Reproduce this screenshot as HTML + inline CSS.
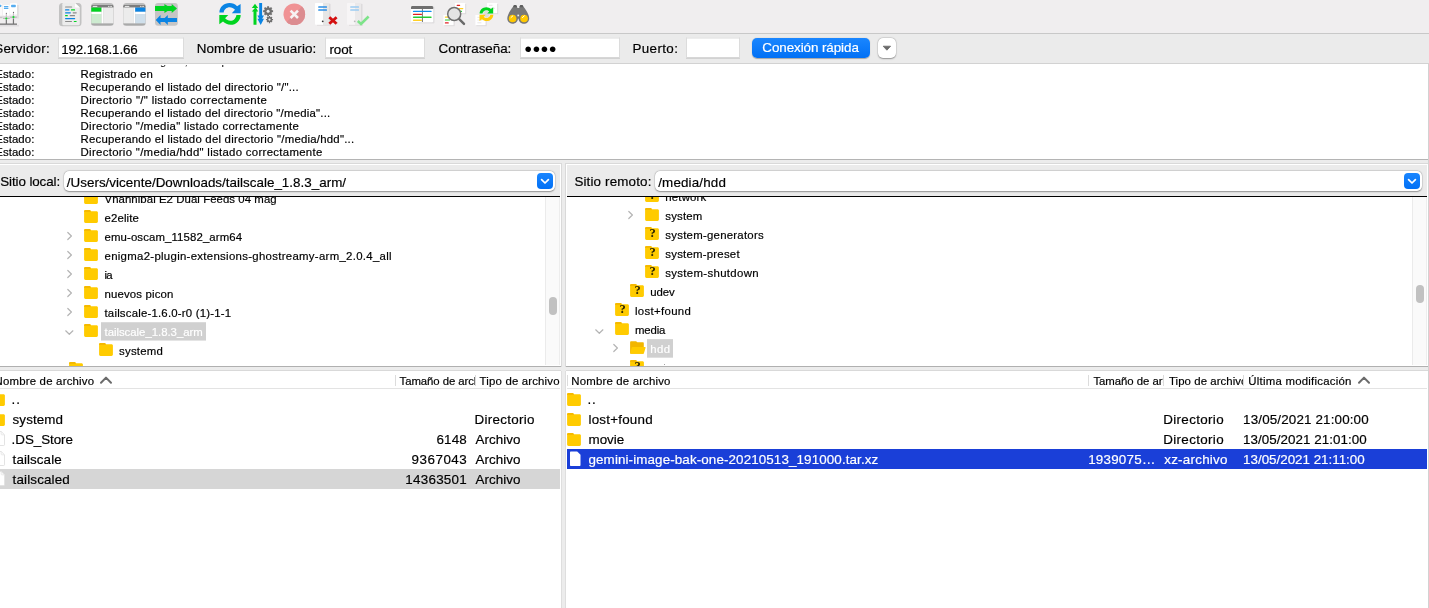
<!DOCTYPE html>
<html lang="es">
<head>
<meta charset="utf-8">
<title>FileZilla</title>
<style>
*{box-sizing:border-box;margin:0;padding:0}
html,body{width:1429px;height:608px;overflow:hidden;background:#fff}
body{position:relative;font-family:"Liberation Sans",sans-serif;font-size:13px;color:#000}
#w{position:absolute;left:0;top:0;width:1429px;height:608px;overflow:hidden;will-change:transform}
.a{position:absolute}
.t{position:absolute;white-space:nowrap;line-height:16px;height:16px;-webkit-text-stroke:0.18px currentColor}
.clip{position:absolute;overflow:hidden}
.clip .t{position:absolute}
#toolbar{left:0;top:0;width:1429px;height:33px;background:#f0eeef}
#tbline{left:0;top:33px;width:1429px;height:1px;background:#c8c8c8}
#qbar{left:0;top:34px;width:1429px;height:29px;background:#ebebeb}
#qbline{left:0;top:63px;width:1429px;height:1px;background:#d2d2d2}
.inp{position:absolute;top:37px;transform:translateY(0.5px);height:21px;background:#fff;border:1px solid #dcdcdc;border-bottom-color:#b0b0b0}
#btn{left:752px;top:38px;width:118px;height:20px;border-radius:5px;background:linear-gradient(#1a86ff,#0170f5);box-shadow:0 0.5px 1px rgba(0,0,0,.3)}
#dd{left:878px;top:38px;width:18px;height:20px;border-radius:5px;background:#fff;box-shadow:0 0.5px 1.5px rgba(0,0,0,.35),0 0 0 0.5px rgba(0,0,0,.08)}
#log{left:0;top:64px;width:1428px;height:95px;background:#fff}
#logline{left:0;top:159px;width:1429px;height:1px;background:#b4b4b4}
#band{left:0;top:160px;width:1429px;height:448px;background:#ececec}
.pane{position:absolute;top:163px;height:204px;background:#ebebeb;border:1px solid #d9d9d9;box-shadow:inset 0 0 0 1px #fff}
.blk{position:absolute;top:196px;height:1px;background:#000}
.tree{position:absolute;top:197px;height:169px;background:#fff}
.trk{position:absolute;top:197px;height:168px;width:15px;background:#fafafa;border-left:1px solid #ebebeb;border-right:1px solid #ededed}
.thumb{position:absolute;width:8px;border-radius:4px;background:#c1c1c1}
.tline{position:absolute;top:366px;height:1px;background:#b0b0b0}
.list{position:absolute;top:370px;height:238px;background:#fff;border-top:1px solid #d9d9d9}
.hline{position:absolute;top:388px;height:1px;background:#e3e3e3}
.vsep{position:absolute;top:375px;height:11px;width:1px;background:#dcdcdc}
.combo{position:absolute;top:171px;height:20px;background:#fff;border-radius:5px;box-shadow:0 0.5px 1.5px rgba(0,0,0,.35),0 0 0 0.5px rgba(0,0,0,.1)}
.cbtn{position:absolute;top:173px;width:16px;height:16px;border-radius:4px;background:linear-gradient(#1a86ff,#0170f5)}
.sel{position:absolute;height:20px}
.hl{position:absolute;height:18px;background:#d0d0d0}
svg{position:absolute;overflow:visible}
</style>
</head>
<body>
<div id="w">
<div class="a" id="toolbar"></div>
<div class="a" id="tbline"></div>
<div class="a" id="qbar"></div>
<div class="a" id="qbline"></div>
<div class="inp" style="left:58px;width:126px"></div>
<div class="inp" style="left:325px;width:100px"></div>
<div class="inp" style="left:520px;width:100px"></div>
<div class="inp" style="left:686px;width:54px"></div>
<div class="a" id="btn"></div>
<div class="a" id="dd"></div>
<div class="a" id="log"></div>
<div class="a" id="logline"></div>
<div class="a" id="band"></div>

<!-- left pane -->
<div class="pane" style="left:-2px;width:564px"></div>
<div class="combo" style="left:64px;width:491px"></div>
<div class="cbtn" style="left:537px"></div>
<div class="blk" style="left:0;width:560px"></div>
<div class="tree" style="left:0;width:561px"></div>
<div class="trk" style="left:545px"></div>
<div class="thumb" style="left:549px;top:297px;height:18px"></div>
<div class="tline" style="left:0;width:561px"></div>
<div class="list" style="left:0;width:561px"></div>
<div class="hline" style="left:0;width:560px"></div>
<div class="vsep" style="left:395px"></div>
<div class="vsep" style="left:475px"></div>
<div class="sel" style="left:0;top:469px;width:560px;background:#d6d6d6"></div>
<div class="hl" style="left:101px;top:322px;width:105px;height:18px;transform:translateY(0.4px) scaleY(1.02)"></div>

<div class="a" style="left:561px;top:371px;width:1px;height:237px;background:#dedede"></div>
<div class="a" style="left:565px;top:371px;width:1px;height:237px;background:#dedede"></div>
<!-- right pane -->
<div class="pane" style="left:565px;width:864px"></div>
<div class="combo" style="left:655px;width:767px"></div>
<div class="cbtn" style="left:1404px"></div>
<div class="blk" style="left:567px;width:860px"></div>
<div class="tree" style="left:566px;width:862px"></div>
<div class="trk" style="left:1412px"></div>
<div class="thumb" style="left:1416px;top:285px;height:18px"></div>
<div class="tline" style="left:566px;width:862px"></div>
<div class="a" style="left:1428px;top:64px;width:1px;height:544px;background:#d2d2d2"></div>
<div class="list" style="left:566px;width:862px"></div>
<div class="hline" style="left:567px;width:860px"></div>
<div class="vsep" style="left:567px"></div>
<div class="vsep" style="left:1088px"></div>
<div class="vsep" style="left:1163px"></div>
<div class="vsep" style="left:1243px"></div>
<div class="sel" style="left:567px;top:449px;width:860px;background:#1a3fd8"></div>
<div class="hl" style="left:647px;top:339px;width:26px;height:18px;transform:translateY(0.4px) scaleY(1.03)"></div>

<span class="t" id="pw" style="left:524.600px;top:37px;font-size:21px;line-height:24px;height:24px;letter-spacing:0.780px;-webkit-text-stroke:0">••••</span>
<svg style="left:-6px;top:2px" width="26" height="26" viewBox="0 0 26 26">
<rect x="23" y="3" width="1.800" height="13.500" fill="#e0dedf"/>
<rect x="6" y="22.800" width="19" height="1.700" fill="#dfdddf"/>
<rect x="1.500" y="1.500" width="6.600" height="12" rx=".8" fill="#fbfafa"/>
<rect x="9" y="2.900" width="6.600" height="10.500" rx=".8" fill="#fff"/>
<rect x="15.900" y="1.200" width="7.100" height="11.200" rx=".8" fill="#fff"/>
<rect x="4.500" y="2.700" width="2.800" height="2.200" rx=".6" fill="#55acf0"/>
<rect x="9.900" y="3.900" width="4.500" height="1.300" rx=".3" fill="#55acf0"/><rect x="9.900" y="5.700" width="4.500" height="1.300" rx=".3" fill="#55acf0"/>
<rect x="17.100" y="2.700" width="4.700" height="2.500" rx=".7" fill="#55acf0"/>
<rect x="6" y="14.200" width="17" height="2.200" fill="#dcdadb"/>
<rect x="16.100" y="14.700" width="6.700" height=".9" fill="#b3b1b2"/>
<rect x="9" y="16.100" width="6.700" height=".9" fill="#b3b1b2"/>
<rect x="0" y="15" width="8" height=".9" fill="#c4c2c3"/>
<rect x="11.800" y="12" width="1.100" height="4" fill="#c9bfc7"/><rect x="18.900" y="11" width="1.100" height="4" fill="#c9bfc7"/>
<rect x="11.750" y="17.500" width="1.200" height="4.500" fill="#767676"/><rect x="18.850" y="16.500" width="1.200" height="5.500" fill="#767676"/>
<circle cx="12.350" cy="11.300" r=".6" fill="#666"/><circle cx="19.500" cy="10.300" r=".6" fill="#555"/>
<circle cx="12.300" cy="16.500" r="1.050" fill="#0fdc2c"/><circle cx="19.450" cy="15.100" r="1.050" fill="#0fdc2c"/>
<rect x="0" y="21.500" width="23" height="1.300" fill="#737373"/>
</svg>
<svg style="left:59px;top:3px" width="23" height="24" viewBox="0 0 23 24">
<rect x="0" y="0" width="22.500" height="23.200" rx="3.500" fill="#c2c2c2"/>
<path d="M4.500 0H16l4.800 4.600V21c0 .7-.5 1.200-1.200 1.200H4.500c-.7 0-1.200-.5-1.200-1.200V1.200C3.300 .5 3.800 0 4.500 0z" fill="#ececec"/>
<path d="M16 0l4.800 4.600H17c-.6 0-1-.4-1-1z" fill="#fff"/>
<g stroke-linecap="round" stroke-width="1.200">
<path d="M6.600 4h6" stroke="#8a8a8a"/>
<path d="M6.600 6.900h3.300" stroke="#0a84e4"/><path d="M12.500 6.900h3" stroke="#00d420"/>
<path d="M6.600 9.800h4.700" stroke="#0a84e4"/><path d="M14.200 9.800h3" stroke="#8a8a8a"/>
<path d="M6.600 12.700h1.700" stroke="#00d420"/><path d="M11.300 12.700h4.200" stroke="#8a8a8a"/>
<path d="M6.600 15.600h9" stroke="#0a84e4"/>
<path d="M6.600 18.500h5.800" stroke="#8a8a8a"/><path d="M15.300 18.500h1.800" stroke="#00d420"/>
</g></svg>
<svg style="left:91px;top:3px" width="23" height="24" viewBox="0 0 23 24">
<rect x="0" y="0" width="22.700" height="23" rx="3.500" fill="#bdbdbd"/>
<path d="M0.300 4.600V3.300C.3 2.600 .9 2 1.600 2h19.500c.7 0 1.300 .6 1.300 1.300v1.300z" fill="#7c7c7c"/>
<rect x="1.800" y="2.900" width="4.500" height="1" fill="#f0f0f0"/><rect x="17" y="2.900" width="1.500" height="1" fill="#ddd"/><rect x="19.200" y="2.900" width="1.800" height="1" fill="#ddd"/>
<rect x="0.300" y="4.600" width="10.300" height="4.200" fill="#00d420"/><rect x="0.300" y="8.800" width="10.300" height="2.200" fill="#fff"/><rect x="0.300" y="11" width="10.300" height="9.600" fill="#cdebd0"/><rect x="10.600" y="4.600" width="1.600" height="16" fill="#fff"/><rect x="12.200" y="4.600" width="10.200" height="16" fill="#ececec"/>
<path d="M0.300 20.600h22.100v.2c0 .800-.9 1.200-2 1.200H2.400c-1.100 0-2.100-.4-2.100-1.200z" fill="#a9a9a9"/>
</svg>
<svg style="left:123px;top:3px" width="23" height="24" viewBox="0 0 23 24">
<rect x="0" y="0" width="22.700" height="23" rx="3.500" fill="#bdbdbd"/>
<path d="M0.300 4.600V3.300C.3 2.600 .9 2 1.600 2h19.500c.7 0 1.300 .6 1.300 1.300v1.300z" fill="#7c7c7c"/>
<rect x="1.800" y="2.900" width="4.500" height="1" fill="#f0f0f0"/><rect x="17" y="2.900" width="1.500" height="1" fill="#ddd"/><rect x="19.200" y="2.900" width="1.800" height="1" fill="#ddd"/>
<rect x="0.300" y="4.600" width="10.300" height="16" fill="#ececec"/><rect x="10.600" y="4.600" width="1.600" height="16" fill="#fff"/><rect x="12.200" y="4.600" width="10.200" height="4.200" fill="#0a84e4"/><rect x="12.200" y="8.800" width="10.200" height="2.200" fill="#fff"/><rect x="12.200" y="11" width="10.200" height="9.600" fill="#cfdfeb"/>
<path d="M0.300 20.600h22.100v.2c0 .800-.9 1.200-2 1.200H2.400c-1.100 0-2.100-.4-2.100-1.200z" fill="#a9a9a9"/>
</svg>
<svg style="left:155px;top:3px" width="23" height="24" viewBox="0 0 23 24">
<rect x="0" y="0" width="22.800" height="22.800" rx="3" fill="#c5c5c5"/>
<path d="M0 3.100H9.400V.9L12.600 3.100H16.700V.9L22 5.500 16.700 10.100V7.900H12.600L9.400 10.100V7.900H0z" fill="#00d420"/>
<path d="M22 14.900H12.800V12.100L9.700 14.900H5.500V12.100L.75 17 5.500 21.900V19.100H9.700L12.800 21.900V19.100H22z" fill="#0a84e4"/>
</svg>
<svg style="left:219px;top:2px" width="23" height="24" viewBox="0 0 23 24">
<path d="M0.400 10.500C0.400 5 5 1 10.500 1c3 0 5.700 1.200 7.600 3.200L21.600 2v9.200h-8.800l3.200-3.400C14.600 6.200 12.700 5.300 10.700 5.300 7.600 5.300 5.100 7.400 4.700 10.500z" fill="#0a84e4"/>
<path d="M21.700 12.900c0 5.500-4.600 9.900-10.100 9.900-3 0-5.700-1.200-7.600-3.200L0.300 22.200V12.900h9l-3.200 3.400c1.400 1.600 3.300 2.500 5.300 2.500 3.100 0 5.600-2.500 6-5.900z" fill="#00d420"/>
</svg>
<svg style="left:251px;top:2px" width="24" height="24" viewBox="0 0 24 24">
<path d="M2.500 22.800V9.500H0.800L3.900 5.900H0.800L4 1.800 7.200 5.900H5.100L7.200 9.500H5.500V22.800z" fill="#00d420"/>
<path d="M8.200 1.100h2.900V13.500h1.900l-1.900 3.300h1.900L9.700 22.900 6.400 16.800h1.800L6.400 13.500h1.800z" fill="#0a84e4"/>
<path d="M20.67 8.34 L22.10 8.21 L22.10 10.19 L20.67 10.06 L20.23 11.12 L21.34 12.03 L19.93 13.44 L19.02 12.33 L17.96 12.77 L18.09 14.20 L16.11 14.20 L16.24 12.77 L15.18 12.33 L14.27 13.44 L12.86 12.03 L13.97 11.12 L13.53 10.06 L12.10 10.19 L12.10 8.21 L13.53 8.34 L13.97 7.28 L12.86 6.37 L14.27 4.96 L15.18 6.07 L16.24 5.63 L16.11 4.20 L18.09 4.20 L17.96 5.63 L19.02 6.07 L19.93 4.96 L21.34 6.37 L20.23 7.28z" fill="#6f6f6f"/><circle cx="17.1" cy="9.2" r="3.6719999999999997" fill="#6f6f6f"/><circle cx="17.1" cy="9.2" r="1.5" fill="#f0eeef"/>
<path d="M21.02 16.99 L22.03 16.90 L22.03 18.30 L21.02 18.21 L20.71 18.95 L21.49 19.60 L20.50 20.59 L19.85 19.81 L19.11 20.12 L19.20 21.13 L17.80 21.13 L17.89 20.12 L17.15 19.81 L16.50 20.59 L15.51 19.60 L16.29 18.95 L15.98 18.21 L14.97 18.30 L14.97 16.90 L15.98 16.99 L16.29 16.25 L15.51 15.60 L16.50 14.61 L17.15 15.39 L17.89 15.08 L17.80 14.07 L19.20 14.07 L19.11 15.08 L19.85 15.39 L20.50 14.61 L21.49 15.60 L20.71 16.25z" fill="#6f6f6f"/><circle cx="18.5" cy="17.6" r="2.592" fill="#6f6f6f"/><circle cx="18.5" cy="17.6" r="1.1" fill="#f0eeef"/>
</svg>
<svg style="left:283px;top:3px" width="23" height="23" viewBox="0 0 23 23">
<circle cx="11.300" cy="11.250" r="10.800" fill="#f09294"/>
<path d="M18.940 3.610A10.800 10.800 0 0 1 3.660 18.890z" fill="#dc8c90"/>
<path d="M7.600 7.600l7.400 7.400M15 7.600l-7.400 7.400" stroke="#f7f3f3" stroke-width="2.600"/>
</svg>
<svg style="left:315px;top:3px" width="25" height="24" viewBox="0 0 25 24">
<rect x="2" y="21.400" width="14" height="1.300" fill="#dddbdc"/>
<path d="M1 0h7v21.700H1c-.6 0-1-.4-1-1V1c0-.6.4-1 1-1z" fill="#ffffff"/>
<path d="M8 0h6.200c.6 0 1 .4 1 1v20.700H8z" fill="#e6e6e6"/>
<rect x="14.200" y="1" width="1.200" height="20" fill="#dad8d9"/>
<rect x="3.200" y="3.300" width="8.800" height="1.500" rx=".5" fill="#2b8fe6"/>
<rect x="3.200" y="6.200" width="8.800" height="1.500" rx=".5" fill="#2b8fe6"/>
<circle cx="7.700" cy="18.300" r=".9" fill="#333"/>
<path d="M14.300 14.200l7.300 6.600M21.600 14.200l-7.300 6.600" stroke="#d40f0f" stroke-width="2.800"/><path d="M21.900 20.200l1 1" stroke="#bbb" stroke-width="1" opacity=".5"/>
</svg>
<svg style="left:347px;top:3px" width="25" height="24" viewBox="0 0 25 24">
<rect x="2" y="21.400" width="14" height="1.300" fill="#dddbdc"/>
<path d="M1 0h7v21.700H1c-.6 0-1-.4-1-1V1c0-.6.4-1 1-1z" fill="#f7f5f6"/>
<path d="M8 0h6.200c.6 0 1 .4 1 1v20.700H8z" fill="#ebe9ea"/>
<rect x="14.200" y="1" width="1.200" height="20" fill="#dad8d9"/>
<rect x="3.200" y="3.300" width="8.800" height="1.500" rx=".5" fill="#9ccbf2"/>
<rect x="3.200" y="6.200" width="8.800" height="1.500" rx=".5" fill="#9ccbf2"/>
<circle cx="7.700" cy="18.300" r=".9" fill="#bbb"/>
<path d="M10.800 18l3.200 2.900 7.600-7.400" fill="none" stroke="#7ee38a" stroke-width="2.600"/>
</svg>
<svg style="left:411px;top:5px" width="24" height="19" viewBox="0 0 24 19">
<rect x="1" y="1.500" width="22.500" height="17" rx="1" fill="#dfdddf"/>
<rect x="0" y="1" width="22.200" height="16.200" rx="1" fill="#fff"/>
<path d="M0 4V2.300C0 1.600 .6 1 1.300 1h19.600c.7 0 1.300 .6 1.300 1.300V4z" fill="#6f6f6f"/>
<rect x="10.900" y="4" width="1.100" height="13" fill="#808080"/>
<g stroke-linecap="round" stroke-width="1.400">
<path d="M2.600 6.400h17.400" stroke="#0c8ff0"/>
<path d="M2.600 9.400h7.700" stroke="#e02020"/>
<path d="M2.600 12.200h17.400" stroke="#22cc33"/>
<path d="M2.600 15.200h7.700" stroke="#ffcf24"/>
</g></svg>
<svg style="left:443px;top:3px" width="24" height="24" viewBox="0 0 24 24">
<rect x="13" y="1" width="10.200" height="10.200" fill="#dcdadb"/><rect x="12" y="0" width="10.200" height="10.200" fill="#fff"/><rect x="1.4" y="13" width="10.200" height="10.200" fill="#dcdadb"/><rect x="0.4" y="12" width="10.200" height="10.200" fill="#fff"/>
<g stroke-linecap="round" stroke-width="1.200"><path d="M14.200 2.300h2.400" stroke="#e02020"/><path d="M16 5.600h3.800" stroke="#ffcf24"/><path d="M16.500 8.300h2" stroke="#22cc33"/>
<path d="M2.400 14.200h2.500" stroke="#ffcf24"/><path d="M2.400 17h4" stroke="#22cc33"/><path d="M2.400 19.900h2.800" stroke="#e02020"/></g>
<path d="M15.500 15.400l5.500 5.500" stroke="#6a6a6a" stroke-width="2.400" stroke-linecap="round"/>
<circle cx="11.200" cy="11" r="6.500" fill="#e4e4e4" stroke="#6f6f6f" stroke-width="1.500"/>
</svg>
<svg style="left:475px;top:3px" width="24" height="24" viewBox="0 0 24 24">
<rect x="13" y="1" width="10.200" height="10.200" fill="#dcdadb"/><rect x="12" y="0" width="10.200" height="10.200" fill="#fff"/><rect x="1.4" y="13" width="10.200" height="10.200" fill="#dcdadb"/><rect x="0.4" y="12" width="10.200" height="10.200" fill="#fff"/>
<g stroke="#e6e4e5" stroke-width="1"><path d="M14 2.300h3.500M14 5.300h6M2.400 14.300h3M2.400 17h5M2.400 19.800h4"/></g>
<circle cx="11.400" cy="11" r="3.200" fill="#dcdcdc"/>
<path d="M4.600 10.600C4.600 7 7.600 4.200 11.300 4.200c1.800 0 3.400.7 4.600 1.800L18.200 4.300v6.300h-6l2-2.100c-.8-.8-1.800-1.200-2.900-1.200-1.900 0-3.500 1.400-3.800 3.300z" fill="#00d420"/>
<path d="M18.300 11.700c0 3.600-3 6.400-6.700 6.400-1.800 0-3.400-.7-4.600-1.800L4.500 18V11.700h6.200l-2 2.100c.8.800 1.800 1.200 2.900 1.200 1.900 0 3.500-1.400 3.800-3.300z" fill="#ffcb05"/>
</svg>
<svg style="left:507px;top:4px" width="24" height="21" viewBox="0 0 24 21">
<path d="M6.300 2.600C6.300 1.600 7 .9 8.100 .9s1.800 .7 1.800 1.700l.5 1.300h1.800l.5-1.300c0-1 .7-1.700 1.800-1.700s1.800 .7 1.800 1.700c2 2.400 5.900 7.800 5.900 11.800 0 3-2.300 5.300-5.300 5.300s-5.200-2.200-5.300-5h-.7c-.1 2.800-2.400 5-5.300 5C2.600 19.700 .3 17.400 .3 14.400c0-4 4-9.400 6-11.800z" fill="#777"/>
<path d="M6.300 2.600C6.300 1.600 7 .9 8.100 .9s1.800 .7 1.800 1.700v.6H6.300zM12.600 2.600c0-1 .7-1.700 1.800-1.700s1.800 .7 1.800 1.700v.6h-3.600z" fill="#5e5e5e"/>
<rect x="10.400" y="10.600" width="1.700" height="1.700" fill="#eee"/>
<circle cx="5.600" cy="14.500" r="3.800" fill="#ffc800"/><circle cx="17.100" cy="14.500" r="3.800" fill="#ffc800"/>
<path d="M4 13.500l1.800-1.600M15.500 13.500l1.800-1.600" stroke="#fff" stroke-width="1" stroke-linecap="round"/>
</svg>
<svg style="left:882px;top:43.7px" width="10" height="8" viewBox="0 0 10 8"><path d="M1.200 2.200h7.400L4.900 6.200z" fill="#6a6a6a" stroke="#6a6a6a" stroke-width=".8" stroke-linejoin="round"/></svg>
<svg style="left:537px;top:173px" width="16" height="16" viewBox="0 0 16 16"><path d="M4.600 6.600L8 10l3.400-3.400" fill="none" stroke="#fff" stroke-width="1.700" stroke-linecap="round" stroke-linejoin="round"/></svg>
<svg style="left:1404px;top:173px" width="16" height="16" viewBox="0 0 16 16"><path d="M4.600 6.600L8 10l3.400-3.400" fill="none" stroke="#fff" stroke-width="1.700" stroke-linecap="round" stroke-linejoin="round"/></svg>
<div class="clip" style="left:0px;top:197px;width:545px;height:169px">
<svg style="left:84px;top:-6px" width="14" height="13" viewBox="0 0 14 13"><path d="M1.500 .1h3.800c.6 0 1 .2 1.300 .6l.4 .5h5.500c.8 0 1.400 .6 1.400 1.400v8.900c0 .8-.6 1.400-1.400 1.400H1.500c-.8 0-1.400-.6-1.400-1.400V1.500C.1 .7 .7 .1 1.500 .1z" fill="#ffcb00"/><path d="M.1 1.900V1.500C.1 .7 .7 .1 1.500 .1h3.800c.6 0 1 .2 1.300 .6l.4 .5c-.3 .4-.7 .7-1.300 .7z" fill="#f5b900"/></svg>
<svg style="left:84px;top:13px" width="14" height="13" viewBox="0 0 14 13"><path d="M1.500 .1h3.800c.6 0 1 .2 1.300 .6l.4 .5h5.500c.8 0 1.400 .6 1.400 1.400v8.900c0 .8-.6 1.400-1.400 1.400H1.500c-.8 0-1.400-.6-1.400-1.400V1.500C.1 .7 .7 .1 1.500 .1z" fill="#ffcb00"/><path d="M.1 1.900V1.500C.1 .7 .7 .1 1.500 .1h3.800c.6 0 1 .2 1.300 .6l.4 .5c-.3 .4-.7 .7-1.300 .7z" fill="#f5b900"/></svg>
<svg style="left:84px;top:32px" width="14" height="13" viewBox="0 0 14 13"><path d="M1.500 .1h3.800c.6 0 1 .2 1.300 .6l.4 .5h5.500c.8 0 1.400 .6 1.400 1.400v8.900c0 .8-.6 1.400-1.400 1.400H1.500c-.8 0-1.400-.6-1.400-1.400V1.500C.1 .7 .7 .1 1.500 .1z" fill="#ffcb00"/><path d="M.1 1.900V1.500C.1 .7 .7 .1 1.500 .1h3.800c.6 0 1 .2 1.300 .6l.4 .5c-.3 .4-.7 .7-1.300 .7z" fill="#f5b900"/></svg>
<svg style="left:84px;top:51px" width="14" height="13" viewBox="0 0 14 13"><path d="M1.500 .1h3.800c.6 0 1 .2 1.300 .6l.4 .5h5.500c.8 0 1.400 .6 1.400 1.400v8.900c0 .8-.6 1.400-1.400 1.400H1.500c-.8 0-1.400-.6-1.400-1.400V1.500C.1 .7 .7 .1 1.500 .1z" fill="#ffcb00"/><path d="M.1 1.900V1.500C.1 .7 .7 .1 1.500 .1h3.800c.6 0 1 .2 1.300 .6l.4 .5c-.3 .4-.7 .7-1.300 .7z" fill="#f5b900"/></svg>
<svg style="left:84px;top:70px" width="14" height="13" viewBox="0 0 14 13"><path d="M1.500 .1h3.800c.6 0 1 .2 1.300 .6l.4 .5h5.500c.8 0 1.400 .6 1.400 1.400v8.900c0 .8-.6 1.400-1.400 1.400H1.500c-.8 0-1.400-.6-1.400-1.400V1.500C.1 .7 .7 .1 1.500 .1z" fill="#ffcb00"/><path d="M.1 1.900V1.500C.1 .7 .7 .1 1.500 .1h3.800c.6 0 1 .2 1.300 .6l.4 .5c-.3 .4-.7 .7-1.300 .7z" fill="#f5b900"/></svg>
<svg style="left:84px;top:89px" width="14" height="13" viewBox="0 0 14 13"><path d="M1.500 .1h3.800c.6 0 1 .2 1.300 .6l.4 .5h5.500c.8 0 1.400 .6 1.400 1.400v8.900c0 .8-.6 1.400-1.400 1.400H1.500c-.8 0-1.400-.6-1.400-1.400V1.500C.1 .7 .7 .1 1.500 .1z" fill="#ffcb00"/><path d="M.1 1.900V1.500C.1 .7 .7 .1 1.500 .1h3.800c.6 0 1 .2 1.300 .6l.4 .5c-.3 .4-.7 .7-1.300 .7z" fill="#f5b900"/></svg>
<svg style="left:84px;top:108px" width="14" height="13" viewBox="0 0 14 13"><path d="M1.500 .1h3.800c.6 0 1 .2 1.300 .6l.4 .5h5.500c.8 0 1.400 .6 1.400 1.400v8.900c0 .8-.6 1.400-1.400 1.400H1.500c-.8 0-1.400-.6-1.400-1.400V1.500C.1 .7 .7 .1 1.500 .1z" fill="#ffcb00"/><path d="M.1 1.900V1.500C.1 .7 .7 .1 1.500 .1h3.800c.6 0 1 .2 1.300 .6l.4 .5c-.3 .4-.7 .7-1.300 .7z" fill="#f5b900"/></svg>
<svg style="left:84px;top:127px" width="14" height="13" viewBox="0 0 14 13"><path d="M1.500 .1h3.800c.6 0 1 .2 1.300 .6l.4 .5h5.500c.8 0 1.400 .6 1.400 1.400v8.900c0 .8-.6 1.400-1.400 1.400H1.500c-.8 0-1.400-.6-1.400-1.400V1.500C.1 .7 .7 .1 1.500 .1z" fill="#ffcb00"/><path d="M.1 1.900V1.500C.1 .7 .7 .1 1.500 .1h3.800c.6 0 1 .2 1.300 .6l.4 .5c-.3 .4-.7 .7-1.300 .7z" fill="#f5b900"/></svg>
<svg style="left:99px;top:146px" width="14" height="13" viewBox="0 0 14 13"><path d="M1.500 .1h3.800c.6 0 1 .2 1.300 .6l.4 .5h5.500c.8 0 1.400 .6 1.400 1.400v8.900c0 .8-.6 1.400-1.400 1.400H1.500c-.8 0-1.400-.6-1.400-1.400V1.500C.1 .7 .7 .1 1.500 .1z" fill="#ffcb00"/><path d="M.1 1.900V1.500C.1 .7 .7 .1 1.500 .1h3.800c.6 0 1 .2 1.300 .6l.4 .5c-.3 .4-.7 .7-1.300 .7z" fill="#f5b900"/></svg>
<svg style="left:69px;top:165px" width="14" height="13" viewBox="0 0 14 13"><path d="M1.500 .1h3.800c.6 0 1 .2 1.300 .6l.4 .5h5.500c.8 0 1.400 .6 1.400 1.400v8.900c0 .8-.6 1.400-1.400 1.400H1.500c-.8 0-1.400-.6-1.400-1.400V1.500C.1 .7 .7 .1 1.500 .1z" fill="#ffcb00"/><path d="M.1 1.900V1.500C.1 .7 .7 .1 1.500 .1h3.800c.6 0 1 .2 1.300 .6l.4 .5c-.3 .4-.7 .7-1.300 .7z" fill="#f5b900"/></svg>
<svg style="left:67px;top:34.3px" width="6" height="10" viewBox="0 0 6 10"><path d="M0.800 1.500L4.400 5 .8 8.500" fill="none" stroke="#b4b4b4" stroke-width="1.200" stroke-linecap="round" stroke-linejoin="round"/></svg>
<svg style="left:67px;top:53.3px" width="6" height="10" viewBox="0 0 6 10"><path d="M0.800 1.500L4.400 5 .8 8.500" fill="none" stroke="#b4b4b4" stroke-width="1.200" stroke-linecap="round" stroke-linejoin="round"/></svg>
<svg style="left:67px;top:72.3px" width="6" height="10" viewBox="0 0 6 10"><path d="M0.800 1.500L4.400 5 .8 8.500" fill="none" stroke="#b4b4b4" stroke-width="1.200" stroke-linecap="round" stroke-linejoin="round"/></svg>
<svg style="left:67px;top:91.3px" width="6" height="10" viewBox="0 0 6 10"><path d="M0.800 1.500L4.400 5 .8 8.500" fill="none" stroke="#b4b4b4" stroke-width="1.200" stroke-linecap="round" stroke-linejoin="round"/></svg>
<svg style="left:67px;top:110.3px" width="6" height="10" viewBox="0 0 6 10"><path d="M0.800 1.500L4.400 5 .8 8.500" fill="none" stroke="#b4b4b4" stroke-width="1.200" stroke-linecap="round" stroke-linejoin="round"/></svg>
<svg style="left:64.8px;top:132.7px" width="10" height="6" viewBox="0 0 10 6"><path d="M0.700 .8L4.300 4.300 7.900 .8" fill="none" stroke="#b4b4b4" stroke-width="1.200" stroke-linecap="round" stroke-linejoin="round"/></svg>
</div>
<div class="clip" style="left:567px;top:197px;width:845px;height:169px">
<svg style="left:78px;top:-8px" width="14" height="13" viewBox="0 0 14 13"><path d="M1.500 .1h3.800c.6 0 1 .2 1.300 .6l.4 .5h5.500c.8 0 1.400 .6 1.400 1.400v8.900c0 .8-.6 1.400-1.400 1.400H1.500c-.8 0-1.400-.6-1.400-1.400V1.500C.1 .7 .7 .1 1.500 .1z" fill="#ffcb00"/><path d="M.1 1.900V1.500C.1 .7 .7 .1 1.500 .1h3.800c.6 0 1 .2 1.300 .6l.4 .5c-.3 .4-.7 .7-1.300 .7z" fill="#f5b900"/><text x="7.700" y="10.400" text-anchor="middle" font-family="Liberation Serif,Liberation Sans,serif" font-weight="bold" font-size="12.500" fill="#2a2300">?</text></svg>
<svg style="left:78px;top:11px" width="14" height="13" viewBox="0 0 14 13"><path d="M1.500 .1h3.800c.6 0 1 .2 1.300 .6l.4 .5h5.500c.8 0 1.400 .6 1.400 1.400v8.900c0 .8-.6 1.400-1.400 1.400H1.500c-.8 0-1.400-.6-1.400-1.400V1.500C.1 .7 .7 .1 1.500 .1z" fill="#ffcb00"/><path d="M.1 1.900V1.500C.1 .7 .7 .1 1.500 .1h3.800c.6 0 1 .2 1.300 .6l.4 .5c-.3 .4-.7 .7-1.300 .7z" fill="#f5b900"/></svg>
<svg style="left:78px;top:30px" width="14" height="13" viewBox="0 0 14 13"><path d="M1.500 .1h3.800c.6 0 1 .2 1.300 .6l.4 .5h5.500c.8 0 1.400 .6 1.400 1.400v8.900c0 .8-.6 1.400-1.400 1.400H1.500c-.8 0-1.400-.6-1.400-1.400V1.500C.1 .7 .7 .1 1.500 .1z" fill="#ffcb00"/><path d="M.1 1.900V1.500C.1 .7 .7 .1 1.500 .1h3.800c.6 0 1 .2 1.300 .6l.4 .5c-.3 .4-.7 .7-1.300 .7z" fill="#f5b900"/><text x="7.700" y="10.400" text-anchor="middle" font-family="Liberation Serif,Liberation Sans,serif" font-weight="bold" font-size="12.500" fill="#2a2300">?</text></svg>
<svg style="left:78px;top:49px" width="14" height="13" viewBox="0 0 14 13"><path d="M1.500 .1h3.800c.6 0 1 .2 1.300 .6l.4 .5h5.500c.8 0 1.400 .6 1.400 1.400v8.900c0 .8-.6 1.400-1.400 1.400H1.500c-.8 0-1.400-.6-1.400-1.400V1.500C.1 .7 .7 .1 1.500 .1z" fill="#ffcb00"/><path d="M.1 1.900V1.500C.1 .7 .7 .1 1.500 .1h3.800c.6 0 1 .2 1.300 .6l.4 .5c-.3 .4-.7 .7-1.300 .7z" fill="#f5b900"/><text x="7.700" y="10.400" text-anchor="middle" font-family="Liberation Serif,Liberation Sans,serif" font-weight="bold" font-size="12.500" fill="#2a2300">?</text></svg>
<svg style="left:78px;top:68px" width="14" height="13" viewBox="0 0 14 13"><path d="M1.500 .1h3.800c.6 0 1 .2 1.300 .6l.4 .5h5.500c.8 0 1.400 .6 1.400 1.400v8.900c0 .8-.6 1.400-1.400 1.400H1.500c-.8 0-1.400-.6-1.400-1.400V1.500C.1 .7 .7 .1 1.500 .1z" fill="#ffcb00"/><path d="M.1 1.900V1.500C.1 .7 .7 .1 1.500 .1h3.800c.6 0 1 .2 1.300 .6l.4 .5c-.3 .4-.7 .7-1.300 .7z" fill="#f5b900"/><text x="7.700" y="10.400" text-anchor="middle" font-family="Liberation Serif,Liberation Sans,serif" font-weight="bold" font-size="12.500" fill="#2a2300">?</text></svg>
<svg style="left:63px;top:87px" width="14" height="13" viewBox="0 0 14 13"><path d="M1.500 .1h3.800c.6 0 1 .2 1.300 .6l.4 .5h5.500c.8 0 1.400 .6 1.400 1.400v8.900c0 .8-.6 1.400-1.400 1.400H1.500c-.8 0-1.400-.6-1.400-1.400V1.500C.1 .7 .7 .1 1.500 .1z" fill="#ffcb00"/><path d="M.1 1.900V1.500C.1 .7 .7 .1 1.500 .1h3.800c.6 0 1 .2 1.300 .6l.4 .5c-.3 .4-.7 .7-1.300 .7z" fill="#f5b900"/><text x="7.700" y="10.400" text-anchor="middle" font-family="Liberation Serif,Liberation Sans,serif" font-weight="bold" font-size="12.500" fill="#2a2300">?</text></svg>
<svg style="left:48px;top:106px" width="14" height="13" viewBox="0 0 14 13"><path d="M1.500 .1h3.800c.6 0 1 .2 1.300 .6l.4 .5h5.500c.8 0 1.400 .6 1.400 1.400v8.900c0 .8-.6 1.400-1.400 1.400H1.500c-.8 0-1.400-.6-1.400-1.400V1.500C.1 .7 .7 .1 1.500 .1z" fill="#ffcb00"/><path d="M.1 1.900V1.500C.1 .7 .7 .1 1.500 .1h3.800c.6 0 1 .2 1.300 .6l.4 .5c-.3 .4-.7 .7-1.300 .7z" fill="#f5b900"/><text x="7.700" y="10.400" text-anchor="middle" font-family="Liberation Serif,Liberation Sans,serif" font-weight="bold" font-size="12.500" fill="#2a2300">?</text></svg>
<svg style="left:48px;top:125px" width="14" height="13" viewBox="0 0 14 13"><path d="M1.500 .1h3.800c.6 0 1 .2 1.300 .6l.4 .5h5.500c.8 0 1.400 .6 1.400 1.400v8.900c0 .8-.6 1.400-1.400 1.400H1.500c-.8 0-1.400-.6-1.400-1.400V1.500C.1 .7 .7 .1 1.500 .1z" fill="#ffcb00"/><path d="M.1 1.900V1.500C.1 .7 .7 .1 1.500 .1h3.800c.6 0 1 .2 1.300 .6l.4 .5c-.3 .4-.7 .7-1.300 .7z" fill="#f5b900"/></svg>
<svg style="left:63px;top:144px" width="16" height="13" viewBox="0 0 16 13"><path d="M1.200 .200h4.600c.600 0 .900 .300 1.200 .700l.300 .400h5.500c.600 0 1 .4 1 1V11.800c0 .600-.4 1-1 1H1.100c-.600 0-1-.4-1-1V1.300C.1 .7 .6 .2 1.200 .2z" fill="#f2b600"/><path d="M2.600 6h12.300c.500 0 .800 .400 .600 .900l-1.500 5.100c-.200 .500-.600 .800-1.100 .800H1.100c-.500 0-.900-.400-.700-.900L1.600 6.800C1.700 6.300 2.100 6 2.600 6z" fill="#ffcb00"/></svg>
<svg style="left:63px;top:163px" width="14" height="13" viewBox="0 0 14 13"><path d="M1.500 .1h3.800c.6 0 1 .2 1.300 .6l.4 .5h5.500c.8 0 1.400 .6 1.400 1.400v8.900c0 .8-.6 1.400-1.400 1.400H1.500c-.8 0-1.400-.6-1.400-1.400V1.500C.1 .7 .7 .1 1.500 .1z" fill="#ffcb00"/><path d="M.1 1.900V1.500C.1 .7 .7 .1 1.500 .1h3.800c.6 0 1 .2 1.300 .6l.4 .5c-.3 .4-.7 .7-1.300 .7z" fill="#f5b900"/><text x="7.700" y="10.400" text-anchor="middle" font-family="Liberation Serif,Liberation Sans,serif" font-weight="bold" font-size="12.500" fill="#2a2300">?</text></svg>
<svg style="left:61.3px;top:13.3px" width="6" height="10" viewBox="0 0 6 10"><path d="M0.800 1.500L4.400 5 .8 8.500" fill="none" stroke="#b4b4b4" stroke-width="1.200" stroke-linecap="round" stroke-linejoin="round"/></svg>
<svg style="left:46px;top:146.3px" width="6" height="10" viewBox="0 0 6 10"><path d="M0.800 1.500L4.400 5 .8 8.500" fill="none" stroke="#b4b4b4" stroke-width="1.200" stroke-linecap="round" stroke-linejoin="round"/></svg>
<svg style="left:28.3px;top:131.7px" width="10" height="6" viewBox="0 0 10 6"><path d="M0.700 .8L4.300 4.300 7.900 .8" fill="none" stroke="#b4b4b4" stroke-width="1.200" stroke-linecap="round" stroke-linejoin="round"/></svg>
</div>
<svg style="left:-9px;top:393px" width="14" height="13" viewBox="0 0 14 13"><path d="M1.500 .1h3.800c.6 0 1 .2 1.300 .6l.4 .5h5.500c.8 0 1.400 .6 1.400 1.400v8.900c0 .8-.6 1.400-1.400 1.400H1.500c-.8 0-1.400-.6-1.400-1.400V1.500C.1 .7 .7 .1 1.500 .1z" fill="#ffcb00"/><path d="M.1 1.900V1.500C.1 .7 .7 .1 1.500 .1h3.800c.6 0 1 .2 1.300 .6l.4 .5c-.3 .4-.7 .7-1.300 .7z" fill="#f5b900"/></svg>
<svg style="left:-9px;top:413px" width="14" height="13" viewBox="0 0 14 13"><path d="M1.500 .1h3.800c.6 0 1 .2 1.300 .6l.4 .5h5.500c.8 0 1.400 .6 1.400 1.400v8.900c0 .8-.6 1.400-1.400 1.400H1.500c-.8 0-1.400-.6-1.400-1.400V1.500C.1 .7 .7 .1 1.500 .1z" fill="#ffcb00"/><path d="M.1 1.900V1.500C.1 .7 .7 .1 1.500 .1h3.800c.6 0 1 .2 1.300 .6l.4 .5c-.3 .4-.7 .7-1.300 .7z" fill="#f5b900"/></svg>
<svg style="left:-6.3px;top:431px" width="11" height="15" viewBox="0 0 11 15"><path d="M1.200 .5h6l3.300 3.300V13.800c0 .4-.3 .7-.7 .7H1.200c-.4 0-.7-.3-.7-.7V1.200c0-.4 .3-.7 .7-.7z" fill="#fff" stroke="#e3e3e3" stroke-width="1"/><path d="M7.200 .5v2.600c0 .4 .3 .7 .7 .7h2.600" fill="none" stroke="#e4e4e4" stroke-width=".8"/></svg>
<svg style="left:-6.3px;top:451px" width="11" height="15" viewBox="0 0 11 15"><path d="M1.200 .5h6l3.300 3.300V13.800c0 .4-.3 .7-.7 .7H1.200c-.4 0-.7-.3-.7-.7V1.200c0-.4 .3-.7 .7-.7z" fill="#fff" stroke="#e3e3e3" stroke-width="1"/><path d="M7.200 .5v2.600c0 .4 .3 .7 .7 .7h2.600" fill="none" stroke="#e4e4e4" stroke-width=".8"/></svg>
<svg style="left:-6.3px;top:471px" width="11" height="15" viewBox="0 0 11 15"><path d="M1.200 .5h6l3.300 3.300V13.800c0 .4-.3 .7-.7 .7H1.200c-.4 0-.7-.3-.7-.7V1.200c0-.4 .3-.7 .7-.7z" fill="#fff" stroke="#e3e3e3" stroke-width="1"/><path d="M7.200 .5v2.600c0 .4 .3 .7 .7 .7h2.600" fill="none" stroke="#e4e4e4" stroke-width=".8"/></svg>
<svg style="left:567px;top:392.5px" width="14" height="13" viewBox="0 0 14 13"><path d="M1.500 .1h3.800c.6 0 1 .2 1.300 .6l.4 .5h5.500c.8 0 1.400 .6 1.400 1.400v8.900c0 .8-.6 1.400-1.400 1.400H1.500c-.8 0-1.400-.6-1.400-1.400V1.500C.1 .7 .7 .1 1.500 .1z" fill="#ffcb00"/><path d="M.1 1.900V1.500C.1 .7 .7 .1 1.500 .1h3.800c.6 0 1 .2 1.300 .6l.4 .5c-.3 .4-.7 .7-1.300 .7z" fill="#f5b900"/></svg>
<svg style="left:567px;top:412.5px" width="14" height="13" viewBox="0 0 14 13"><path d="M1.500 .1h3.800c.6 0 1 .2 1.300 .6l.4 .5h5.500c.8 0 1.400 .6 1.400 1.400v8.900c0 .8-.6 1.400-1.400 1.400H1.500c-.8 0-1.400-.6-1.400-1.400V1.500C.1 .7 .7 .1 1.500 .1z" fill="#ffcb00"/><path d="M.1 1.900V1.500C.1 .7 .7 .1 1.500 .1h3.800c.6 0 1 .2 1.300 .6l.4 .5c-.3 .4-.7 .7-1.300 .7z" fill="#f5b900"/></svg>
<svg style="left:567px;top:432.5px" width="14" height="13" viewBox="0 0 14 13"><path d="M1.500 .1h3.800c.6 0 1 .2 1.300 .6l.4 .5h5.500c.8 0 1.400 .6 1.400 1.400v8.900c0 .8-.6 1.400-1.400 1.400H1.500c-.8 0-1.400-.6-1.400-1.400V1.500C.1 .7 .7 .1 1.500 .1z" fill="#ffcb00"/><path d="M.1 1.900V1.500C.1 .7 .7 .1 1.500 .1h3.800c.6 0 1 .2 1.300 .6l.4 .5c-.3 .4-.7 .7-1.300 .7z" fill="#f5b900"/></svg>
<svg style="left:569.6px;top:451px" width="11" height="15" viewBox="0 0 11 15"><path d="M1 .5h6.200l3.300 3.300V14c0 .6-.4 1-1 1H1c-.6 0-1-.4-1-1V1.500c0-.600 .4-1 1-1z" fill="#fff"/></svg>
<svg style="left:100px;top:376.2px" width="12" height="8" viewBox="0 0 12 8"><path d="M1 6.800L6 1.600 11 6.800" fill="none" stroke="#6b6b6b" stroke-width="2" stroke-linecap="round" stroke-linejoin="round"/></svg>
<svg style="left:1358px;top:376.2px" width="12" height="8" viewBox="0 0 12 8"><path d="M1 6.800L6 1.600 11 6.800" fill="none" stroke="#6b6b6b" stroke-width="2" stroke-linecap="round" stroke-linejoin="round"/></svg>
<span class="t" style="left:-5.76px;top:41px;font-size:13.4px;letter-spacing:0.224px;">Servidor:</span>
<span class="t" style="left:61.20px;top:42px;font-size:13.4px;letter-spacing:-0.149px;">192.168.1.66</span>
<span class="t" style="left:196.70px;top:41px;font-size:13.4px;letter-spacing:0.119px;">Nombre de usuario:</span>
<span class="t" style="left:329.50px;top:42px;font-size:13.4px;letter-spacing:-0.085px;">root</span>
<span class="t" style="left:438.60px;top:41px;font-size:13.4px;letter-spacing:-0.023px;">Contraseña:</span>
<span class="t" style="left:632.40px;top:41px;font-size:13.4px;letter-spacing:0.391px;">Puerto:</span>
<span class="t" style="left:762.30px;top:40px;font-size:13.4px;letter-spacing:-0.069px;color:#fff;">Conexión rápida</span>
<div class="clip" style="left:0px;top:65px;width:1427px;height:94px"><span class="t" style="left:80.60px;top:-12px;font-size:11.4px;letter-spacing:0.420px;-webkit-text-stroke:0;">Servidor no seguro, no soporta FTP sobre TLS.</span></div>
<div class="clip" style="left:0px;top:65px;width:1427px;height:94px"><span class="t" style="left:-4.78px;top:-12px;font-size:11.4px;letter-spacing:0.087px;-webkit-text-stroke:0;">Estado:</span></div>
<span class="t" style="left:-4.78px;top:66px;font-size:11.4px;letter-spacing:0.087px;">Estado:</span>
<span class="t" style="left:80.60px;top:66px;font-size:11.4px;letter-spacing:0.101px;">Registrado en</span>
<span class="t" style="left:-4.78px;top:79px;font-size:11.4px;letter-spacing:0.087px;">Estado:</span>
<span class="t" style="left:80.60px;top:79px;font-size:11.4px;letter-spacing:0.215px;">Recuperando el listado del directorio "/"...</span>
<span class="t" style="left:-4.78px;top:92px;font-size:11.4px;letter-spacing:0.087px;">Estado:</span>
<span class="t" style="left:80.60px;top:92px;font-size:11.4px;letter-spacing:0.315px;">Directorio "/" listado correctamente</span>
<span class="t" style="left:-4.78px;top:105px;font-size:11.4px;letter-spacing:0.087px;">Estado:</span>
<span class="t" style="left:80.60px;top:105px;font-size:11.4px;letter-spacing:0.203px;">Recuperando el listado del directorio "/media"...</span>
<span class="t" style="left:-4.78px;top:118px;font-size:11.4px;letter-spacing:0.087px;">Estado:</span>
<span class="t" style="left:80.60px;top:118px;font-size:11.4px;letter-spacing:0.300px;">Directorio "/media" listado correctamente</span>
<span class="t" style="left:-4.78px;top:131px;font-size:11.4px;letter-spacing:0.087px;">Estado:</span>
<span class="t" style="left:80.60px;top:131px;font-size:11.4px;letter-spacing:0.221px;">Recuperando el listado del directorio "/media/hdd"...</span>
<span class="t" style="left:-4.78px;top:144px;font-size:11.4px;letter-spacing:0.087px;">Estado:</span>
<span class="t" style="left:80.60px;top:144px;font-size:11.4px;letter-spacing:0.301px;">Directorio "/media/hdd" listado correctamente</span>
<span class="t" style="left:0.30px;top:174px;font-size:13.4px;letter-spacing:-0.110px;">Sitio local:</span>
<span class="t" style="left:66.80px;top:175px;font-size:13.4px;letter-spacing:0.020px;">/Users/vicente/Downloads/tailscale_1.8.3_arm/</span>
<span class="t" style="left:574.40px;top:174px;font-size:13.4px;letter-spacing:0.155px;">Sitio remoto:</span>
<span class="t" style="left:658.20px;top:175px;font-size:13.4px;letter-spacing:0.166px;">/media/hdd</span>
<div class="clip" style="left:0px;top:197px;width:545px;height:169px"><span class="t" style="left:104.50px;top:-6px;font-size:11.4px;letter-spacing:0.062px;">Vhannibal E2 Dual Feeds 04 mag</span></div>
<span class="t" style="left:104.50px;top:210px;font-size:11.4px;letter-spacing:0.128px;">e2elite</span>
<span class="t" style="left:104.50px;top:229px;font-size:11.4px;letter-spacing:0.117px;">emu-oscam_11582_arm64</span>
<span class="t" style="left:104.50px;top:248px;font-size:11.4px;letter-spacing:0.302px;">enigma2-plugin-extensions-ghostreamy-arm_2.0.4_all</span>
<span class="t" style="left:104.50px;top:267px;font-size:11.4px;letter-spacing:-0.731px;">ia</span>
<span class="t" style="left:104.50px;top:286px;font-size:11.4px;letter-spacing:0.155px;">nuevos picon</span>
<span class="t" style="left:104.50px;top:305px;font-size:11.4px;letter-spacing:0.200px;">tailscale-1.6.0-r0 (1)-1-1</span>
<span class="t" style="left:104.50px;top:324px;font-size:11.4px;letter-spacing:-0.027px;color:#fff;">tailscale_1.8.3_arm</span>
<span class="t" style="left:119.10px;top:343px;font-size:11.4px;letter-spacing:0.221px;">systemd</span>
<div class="clip" style="left:567px;top:197px;width:845px;height:169px"><span class="t" style="left:98.30px;top:-8px;font-size:11.4px;letter-spacing:0.185px;">network</span></div>
<span class="t" style="left:665.30px;top:208px;font-size:11.4px;letter-spacing:0.183px;">system</span>
<span class="t" style="left:665.30px;top:227px;font-size:11.4px;letter-spacing:0.255px;">system-generators</span>
<span class="t" style="left:665.30px;top:246px;font-size:11.4px;letter-spacing:0.228px;">system-preset</span>
<span class="t" style="left:665.30px;top:265px;font-size:11.4px;letter-spacing:0.329px;">system-shutdown</span>
<span class="t" style="left:650.20px;top:284px;font-size:11.4px;letter-spacing:-0.035px;">udev</span>
<span class="t" style="left:635.00px;top:303px;font-size:11.4px;letter-spacing:0.328px;">lost+found</span>
<span class="t" style="left:635.00px;top:322px;font-size:11.4px;letter-spacing:-0.172px;">media</span>
<span class="t" style="left:650.20px;top:341px;font-size:11.4px;letter-spacing:0.465px;color:#fff;">hdd</span>
<div class="clip" style="left:567px;top:197px;width:845px;height:168px"><span class="t" style="left:83.20px;top:163px;font-size:11.4px;letter-spacing:0.065px;-webkit-text-stroke:0;">net</span></div>
<span class="t" style="left:-5.53px;top:373px;font-size:11.4px;letter-spacing:0.209px;">Nombre de archivo</span>
<div class="clip" style="left:396px;top:371px;width:78.5px;height:17px"><span class="t" style="left:3.60px;top:2px;font-size:11.4px;letter-spacing:-0.087px;">Tamaño de archivo</span></div>
<div class="clip" style="left:476px;top:371px;width:84px;height:17px"><span class="t" style="left:3.60px;top:2px;font-size:11.4px;letter-spacing:0.177px;">Tipo de archivo</span></div>
<span class="t" style="left:571.30px;top:373px;font-size:11.4px;letter-spacing:0.182px;">Nombre de archivo</span>
<div class="clip" style="left:1090px;top:371px;width:73.29999999999995px;height:17px"><span class="t" style="left:3.40px;top:2px;font-size:11.4px;letter-spacing:-0.042px;">Tamaño de archivo</span></div>
<div class="clip" style="left:1165px;top:371px;width:78.29999999999995px;height:17px"><span class="t" style="left:4.00px;top:2px;font-size:11.4px;letter-spacing:0.067px;">Tipo de archivo</span></div>
<span class="t" style="left:1248.30px;top:373px;font-size:11.4px;letter-spacing:0.244px;">Última modificación</span>
<span class="t" style="left:11.60px;top:392px;font-size:13.4px;letter-spacing:0.880px;">..</span>
<span class="t" style="left:12.60px;top:412px;font-size:13.4px;letter-spacing:0.082px;">systemd</span>
<span class="t" style="left:11.60px;top:432px;font-size:13.4px;letter-spacing:-0.053px;">.DS_Store</span>
<span class="t" style="left:12.60px;top:452px;font-size:13.4px;letter-spacing:0.084px;">tailscale</span>
<span class="t" style="left:12.60px;top:472px;font-size:13.4px;letter-spacing:0.147px;">tailscaled</span>
<span class="t" style="left:436.40px;top:432px;font-size:13.4px;letter-spacing:0.186px;">6148</span>
<span class="t" style="left:411.60px;top:452px;font-size:13.4px;letter-spacing:0.503px;">9367043</span>
<span class="t" style="left:405.30px;top:472px;font-size:13.4px;letter-spacing:0.267px;">14363501</span>
<span class="t" style="left:474.40px;top:412px;font-size:13.4px;letter-spacing:0.317px;">Directorio</span>
<span class="t" style="left:475.40px;top:432px;font-size:13.4px;letter-spacing:0.066px;">Archivo</span>
<span class="t" style="left:475.40px;top:452px;font-size:13.4px;letter-spacing:0.066px;">Archivo</span>
<span class="t" style="left:475.40px;top:472px;font-size:13.4px;letter-spacing:0.066px;">Archivo</span>
<span class="t" style="left:587.50px;top:392px;font-size:13.4px;letter-spacing:0.880px;">..</span>
<span class="t" style="left:588.50px;top:412px;font-size:13.4px;letter-spacing:0.220px;">lost+found</span>
<span class="t" style="left:588.50px;top:432px;font-size:13.4px;letter-spacing:-0.018px;">movie</span>
<span class="t" style="left:588.50px;top:452px;font-size:13.4px;letter-spacing:0.111px;color:#fff;">gemini-image-bak-one-20210513_191000.tar.xz</span>
<span class="t" style="left:1088.20px;top:452px;font-size:13.4px;letter-spacing:0.224px;color:#fff;">1939075…</span>
<span class="t" style="left:1163.20px;top:412px;font-size:13.4px;letter-spacing:0.350px;">Directorio</span>
<span class="t" style="left:1163.20px;top:432px;font-size:13.4px;letter-spacing:0.350px;">Directorio</span>
<span class="t" style="left:1164.20px;top:452px;font-size:13.4px;letter-spacing:0.248px;color:#fff;">xz-archivo</span>
<span class="t" style="left:1243.10px;top:412px;font-size:13.4px;letter-spacing:0.149px;">13/05/2021 21:00:00</span>
<span class="t" style="left:1243.10px;top:432px;font-size:13.4px;letter-spacing:0.038px;">13/05/2021 21:01:00</span>
<span class="t" style="left:1243.10px;top:452px;font-size:13.4px;letter-spacing:-0.018px;color:#fff;">13/05/2021 21:11:00</span>
</div>
</body>
</html>
